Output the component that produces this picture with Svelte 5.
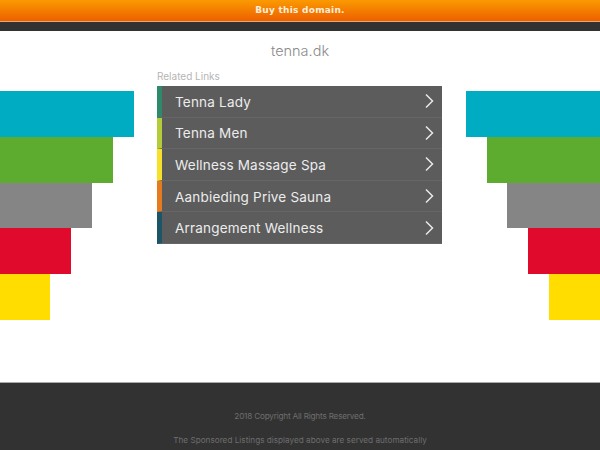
<script lang="ts">
	const links = [
		{ label: 'Tenna Lady', color: '#2f8a6c' },
		{ label: 'Tenna Men', color: '#b5cc3a' },
		{ label: 'Wellness Massage Spa', color: '#f7e02a' },
		{ label: 'Aanbieding Prive Sauna', color: '#e67a1e' },
		{ label: 'Arrangement Wellness', color: '#1d5568' }
	];

	const bars = [
		{ color: '#00acc1', left: 134, right: 134 },
		{ color: '#5eac2f', left: 113, right: 113 },
		{ color: '#858585', left: 92, right: 93 },
		{ color: '#e00b2c', left: 71, right: 72 },
		{ color: '#ffdd00', left: 50, right: 51 }
	];
</script>

<div class="page">
	<a class="buy" href="#buy">Buy this domain.</a>
	<div class="strip"></div>

	<h1>tenna.dk</h1>

	<main>
		<div class="bars left">
			{#each bars as bar}
				<div class="bar" style="background: {bar.color}; width: {bar.left}px"></div>
			{/each}
		</div>

		<section>
			<h2>Related Links</h2>
			<ul>
				{#each links as link}
					<li style="border-left-color: {link.color}">
						<a href="#link">{link.label}</a>
						<svg width="10" height="16" viewBox="0 0 10 16" aria-hidden="true">
							<path d="M2 1.5 L8.5 8 L2 14.5" fill="none" stroke="#e8e8e8" stroke-width="1.5" />
						</svg>
					</li>
				{/each}
			</ul>
		</section>

		<div class="bars right">
			{#each bars as bar}
				<div class="bar" style="background: {bar.color}; width: {bar.right}px"></div>
			{/each}
		</div>
	</main>

	<footer>
		<p class="copyright">2018 Copyright All Rights Reserved.</p>
		<p>The Sponsored Listings displayed above are served automatically<br />by a third party. Neither the service provider nor the domain owner</p>
	</footer>
</div>

<style>
	:global(body) {
		background: #fff;
	}

	.page {
		height: 450px;
		overflow: hidden;
		font-family: Inter, 'Liberation Sans', sans-serif;
	}

	.buy {
		display: block;
		box-sizing: border-box;
		height: 22px;
		line-height: 20px;
		text-align: center;
		color: #fbeedd;
		font-family: 'DejaVu Sans', sans-serif;
		font-size: 9px;
		font-weight: bold;
		letter-spacing: 0.25px;
		text-decoration: none;
		background: linear-gradient(#fa9a00, #ee6000);
		border-bottom: 1px solid #e6a878;
	}

	.strip {
		height: 9px;
		background: #323232;
	}

	h1 {
		margin: 11px 0 0;
		height: 18px;
		line-height: 18px;
		text-align: center;
		color: #8a8a8a;
		font-size: 14.5px;
		font-weight: 300;
	}

	main {
		display: grid;
		grid-template-columns: 157px 285px 158px;
		margin-top: 9px;
		height: 313px;
	}

	.bars {
		display: flex;
		flex-direction: column;
		padding-top: 22px;
	}

	.right {
		align-items: flex-end;
	}

	.bar {
		height: 45.8px;
	}

	h2 {
		margin: 0;
		height: 17px;
		line-height: 15px;
		color: #b5b5b5;
		font-size: 10px;
		font-weight: 400;
	}

	ul {
		margin: 0;
		padding: 0;
		list-style: none;
		background: #5c5c5c;
	}

	li {
		box-sizing: border-box;
		height: 31.6px;
		display: flex;
		align-items: center;
		justify-content: space-between;
		padding: 1px 8px 0 13px;
		border-left: 5px solid;
		border-bottom: 1px solid #666;
	}

	li a {
		color: #ececec;
		font-size: 13.5px;
		letter-spacing: 0.2px;
		text-decoration: none;
	}

	li svg {
		margin-top: -1px;
	}

	footer {
		background: #323232;
		border-top: 1px solid #aaa;
		height: 67px;
		padding-top: 27px;
		text-align: center;
		color: #6e6e6e;
		font-size: 8.2px;
		line-height: 12px;
	}

	footer p {
		margin: 0 0 11px;
		line-height: 14px;
	}

	footer .copyright {
		line-height: 12px;
		letter-spacing: -0.2px;
	}
</style>
